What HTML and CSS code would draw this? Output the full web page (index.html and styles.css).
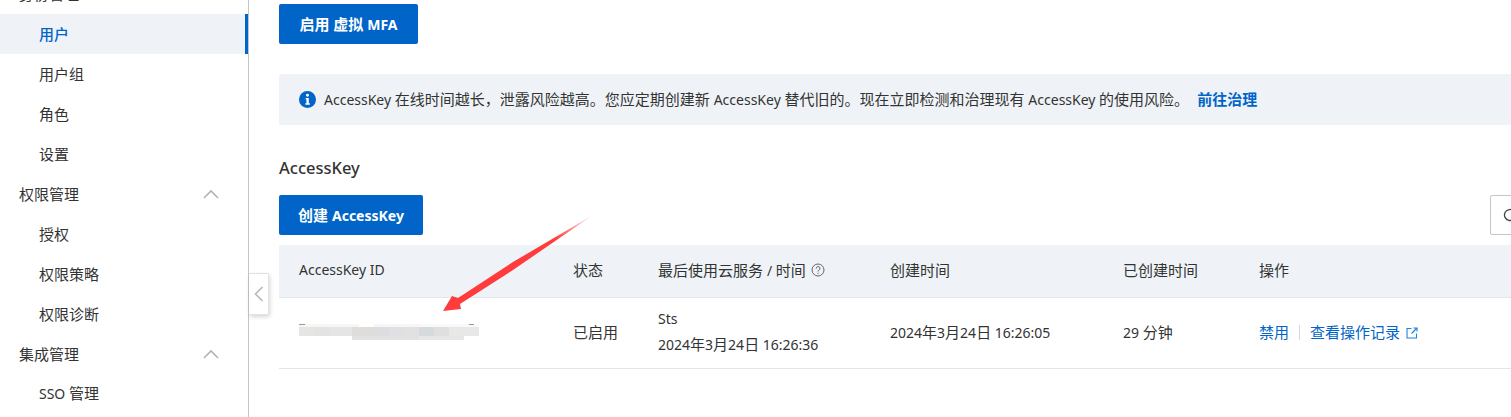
FILE: index.html
```html
<!DOCTYPE html>
<html>
<head>
    <title>AccessKey</title>
    <link rel="stylesheet" href="styles.css">
</head>
<body>
    <div class="sidebar">
        <div class="nav-group">身份管理</div>
        <div class="nav-item active">用户</div>
        <div class="nav-item">用户组</div>
        <div class="nav-item">角色</div>
        <div class="nav-item">设置</div>
        <div class="nav-group">权限管理
            <svg class="chevron" viewBox="0 0 16 10"><path d="M1 9 L8 2 L15 9"/></svg>
        </div>
        <div class="nav-item">授权</div>
        <div class="nav-item">权限策略</div>
        <div class="nav-item">权限诊断</div>
        <div class="nav-group">集成管理
            <svg class="chevron" viewBox="0 0 16 10"><path d="M1 9 L8 2 L15 9"/></svg>
        </div>
        <div class="nav-item"><span><span class="en">SSO </span>管理</span></div>
    </div>

    <div class="collapse">
        <svg viewBox="0 0 10 16"><path d="M8.5 1 L1.5 8 L8.5 15"/></svg>
    </div>

    <div class="main">
        <button class="btn btn-mfa">启用 虚拟 <span class="en">MFA</span></button>

        <div class="banner">
            <svg class="info-icon" viewBox="0 0 16 16">
                <circle cx="8" cy="8" r="8" fill="#0064c8"/>
                <circle cx="8" cy="4.1" r="1.4" fill="#fff"/>
                <path d="M6.3 6.5 H9.2 V11.6 H10.2 V13 H6 V11.6 H7 V7.9 H6.3 Z" fill="#fff"/>
            </svg>
            <span><span class="en">AccessKey </span>在线时间越长，泄露风险越高。您应定期创建新 <span class="en">AccessKey </span>替代旧的。现在立即检测和治理现有 <span class="en">AccessKey </span>的使用风险。</span>
            <a class="banner-link">前往治理</a>
        </div>

        <h2 class="section-title">AccessKey</h2>

        <div class="toolbar">
            <button class="btn btn-create">创建 <span class="en">AccessKey</span></button>
            <button class="btn-refresh">
                <svg viewBox="0 0 16 16"><path d="M13.5 8 A5.5 5.5 0 1 1 11.8 4 M12 1.5 V4.5 H9"/></svg>
            </button>
        </div>

        <div class="table-row table-head">
            <div class="cell"><span class="en">AccessKey ID</span></div>
            <div class="cell">状态</div>
            <div class="cell"><span>最后使用云服务 <span class="en">/ </span>时间</span>
                <svg class="help-icon" viewBox="0 0 14 14">
                    <circle cx="7" cy="7" r="6"/>
                    <path d="M5.2 5.6 A1.9 1.9 0 1 1 7.9 7.2 Q7 7.6 7 8.6"/>
                    <path d="M7 9.7 V10.9"/>
                </svg>
            </div>
            <div class="cell">创建时间</div>
            <div class="cell">已创建时间</div>
            <div class="cell">操作</div>
        </div>

        <div class="table-row table-body">
            <div class="cell"><div class="redacted"></div></div>
            <div class="cell">已启用</div>
            <div class="cell cell-stack">
                <div class="en">Sts</div>
                <div><span class="en">2024</span>年<span class="en">3</span>月<span class="en">24</span>日<span class="en"> 16:26:36</span></div>
            </div>
            <div class="cell"><span><span class="en">2024</span>年<span class="en">3</span>月<span class="en">24</span>日<span class="en"> 16:26:05</span></span></div>
            <div class="cell"><span><span class="en">29 </span>分钟</span></div>
            <div class="cell actions">
                <a>禁用</a>
                <span class="divider"></span>
                <a>查看操作记录</a>
                <svg class="link-icon" viewBox="0 0 12 12">
                    <path d="M5.5 1.5 H1 V11 H10.5 V6.5"/>
                    <path d="M7.5 1 H11 V4.5 M11 1 L5.5 6.5"/>
                </svg>
            </div>
        </div>

        <svg class="arrow" viewBox="0 0 160 105">
            <defs>
                <linearGradient id="arrowFade" x1="1" y1="0" x2="0" y2="1">
                    <stop offset="0.02" stop-color="#ff3b3b" stop-opacity="0.15"/>
                    <stop offset="0.25" stop-color="#ff3b3b"/>
                </linearGradient>
            </defs>
            <path d="M153 5 L73 52 L18 88 L12 86 L3 101 L21 99 L20 94 L73 60 Z" fill="url(#arrowFade)"/>
        </svg>
    </div>
</body>
</html>
```

FILE: styles.css
```css
* {
    box-sizing: border-box;
}

html, body {
    height: 100%;
}

body {
    margin: 0;
    display: flex;
    overflow: hidden;
    background: white;
    color: #333;
    font-family: "Noto Sans", "Noto Sans CJK SC", sans-serif;
    font-size: 15px;
    line-height: 20px;
}

/* latin runs sit a size below the chinese text */
.en {
    font-size: 14px;
}

/* sidebar */
.sidebar {
    flex: 0 0 249px;
    margin-top: -26px;
    height: calc(100% + 26px);
    border-right: 1px solid #c0c6cc;
}

.nav-group,
.nav-item {
    height: 40px;
    padding-bottom: 1px;
    display: flex;
    align-items: center;
}

.nav-group {
    padding-left: 19px;
    padding-right: 29px;
    justify-content: space-between;
}

.nav-item {
    padding-left: 39px;
}

.nav-item.active {
    background: #eff3f8;
    color: #0064c8;
    font-weight: 500;
    border-right: 3px solid #0064c8;
}

.chevron {
    width: 16px;
    height: 10px;
}

.chevron path {
    fill: none;
    stroke: #b0b4b8;
    stroke-width: 1.6;
}

.collapse {
    position: absolute;
    left: 249px;
    top: 273px;
    width: 20px;
    height: 42px;
    display: flex;
    align-items: center;
    justify-content: center;
    background: white;
    border: 1px solid #dfe2e6;
    border-left: none;
    border-radius: 0 2px 2px 0;
    box-shadow: 1px 2px 4px rgba(0,0,0,0.16);
}

.collapse svg {
    width: 10px;
    height: 16px;
}

.collapse path {
    fill: none;
    stroke: #b4b8bd;
    stroke-width: 1.6;
}

/* main */
.main {
    position: relative;
    flex: 1;
    min-width: 0;
    padding: 4px 0 0 30px;
}

.btn {
    display: block;
    height: 40px;
    padding: 0 0 1px;
    border: none;
    border-radius: 2px;
    background: #0064c8;
    color: white;
    font-family: inherit;
    font-size: 15px;
    font-weight: 700;
}

.btn-mfa {
    width: 139px;
}

.btn-create {
    width: 144px;
}

.banner {
    display: flex;
    align-items: center;
    height: 51px;
    margin-top: 30px;
    margin-right: -10px;
    padding: 0 0 1px 20px;
    background: #eff3f8;
    border-radius: 2px;
}

.info-icon {
    width: 17px;
    height: 17px;
    margin-right: 8px;
}

.banner-link {
    margin-left: 8px;
    color: #0064c8;
    font-weight: 700;
}

.section-title {
    margin: 31px 0 15px;
    font-size: 16.5px;
    font-weight: 500;
    line-height: 24px;
}

.toolbar {
    display: flex;
    justify-content: space-between;
    margin-right: -20px;
}

.btn-refresh {
    width: 41px;
    height: 40px;
    padding: 0;
    background: white;
    border: 1px solid #c0c6cc;
    border-radius: 2px;
}

.btn-refresh svg {
    display: block;
    width: 16px;
    height: 16px;
    margin-left: 11px;
}

.btn-refresh path {
    fill: none;
    stroke: #444;
    stroke-width: 1.3;
}

/* table */
.table-row {
    display: grid;
    grid-template-columns: 274px 85px 232px 233px 136px 1fr;
    align-items: center;
    margin-right: -10px;
    border-bottom: 1px solid #e3e5e8;
}

.table-head {
    height: 53px;
    margin-top: 10px;
    padding-bottom: 2px;
    background: #eff3f8;
}

.table-body {
    height: 71px;
    padding-bottom: 2px;
}

.cell {
    display: flex;
    align-items: center;
    padding-left: 20px;
    white-space: nowrap;
}

.cell-stack {
    flex-direction: column;
    align-items: flex-start;
    gap: 5px;
}

.help-icon {
    width: 14px;
    height: 14px;
    margin-left: 5px;
}

.help-icon circle,
.help-icon path {
    fill: none;
    stroke: #666;
    stroke-width: 1;
}

.redacted {
    width: 180px;
    height: 17px;
    background:
        linear-gradient(to right, #999 0 6px, transparent 6px 170px, #999 170px 175px, transparent 175px) top / 100% 1px no-repeat,
        linear-gradient(to right, #f6f6f5 0 60px, transparent 60px 75px, #f6f6f5 75px 120px, #f7f9fa 120px 180px) top / 100% 3px no-repeat,
        linear-gradient(to right, #e6e5e2 0 15px, #e3e3e4 15px 30px, #e5e5e5 30px 53px, #dedddb 53px 75px, #dddce1 75px 90px, #dfe0e2 90px 105px, #e2e1df 105px 120px, #d6dadd 120px 135px, #dfdfdd 135px 150px, #e8e8e6 150px 180px) 0 3px / 100% 9px no-repeat,
        linear-gradient(to right, transparent 0 53px, #e2e2e1 53px 120px, #e6e7e8 120px 165px, transparent 165px) 0 12px / 100% 4px no-repeat;
}

.actions a {
    color: #0064c8;
}

.divider {
    width: 1px;
    height: 15px;
    margin: 0 10px;
    background: #d5d8dc;
}

.link-icon {
    width: 12px;
    height: 12px;
    margin: 2px 0 0 6px;
}

.link-icon path {
    fill: none;
    stroke: #1e82e0;
    stroke-width: 1.1;
}

.arrow {
    position: absolute;
    left: 191px;
    top: 210px;
    width: 160px;
    height: 105px;
}
```
